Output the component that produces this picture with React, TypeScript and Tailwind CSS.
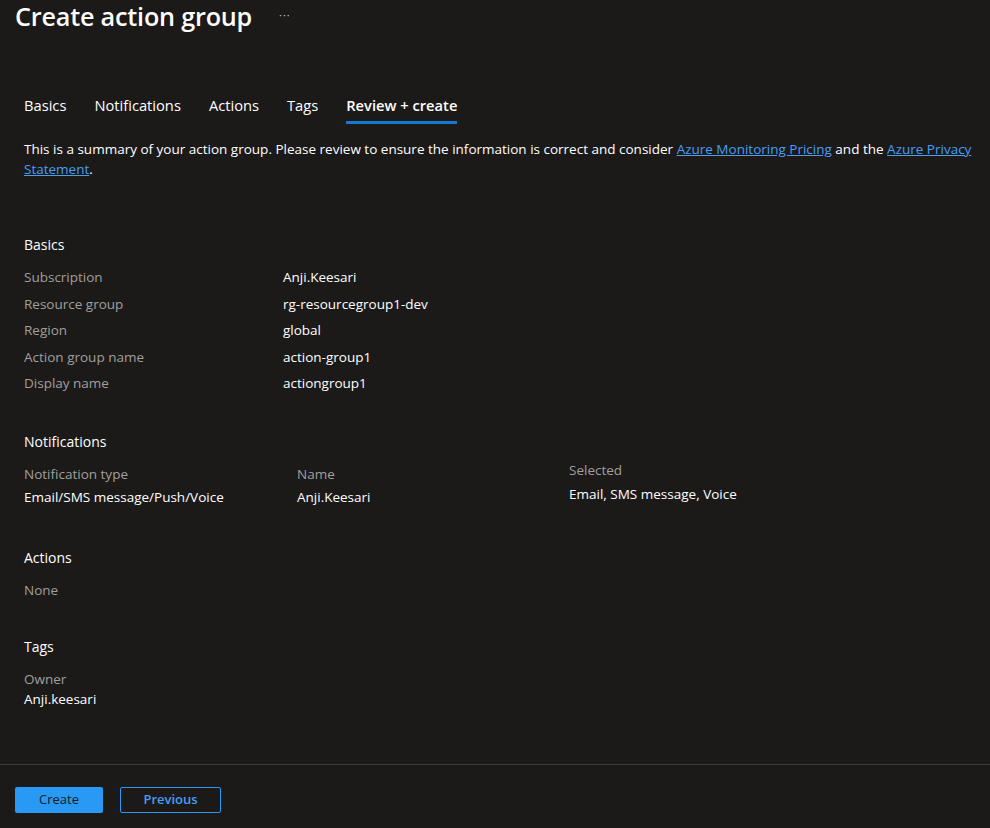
const font = { fontFamily: '"Open Sans", "Noto Sans", sans-serif' };

type Row = { label: string; value: string };

const basics: Row[] = [
    { label: "Subscription", value: "Anji.Keesari" },
    { label: "Resource group", value: "rg-resourcegroup1-dev" },
    { label: "Region", value: "global" },
    { label: "Action group name", value: "action-group1" },
    { label: "Display name", value: "actiongroup1" },
];

const tabs = ["Basics", "Notifications", "Actions", "Tags", "Review + create"];

export default function App() {
    return (
        <div style={font} className="w-[990px] h-[828px] bg-[#1b1a19] text-white flex flex-col overflow-hidden">
            <div className="flex-1 pl-[24px] pr-[12px]">
                {/* header */}
                <div className="flex items-center h-[34px] -ml-[9px]">
                    <h1 className="text-[25.2px] font-semibold tracking-[-0.2px] leading-none">Create action group</h1>
                    <span className="ml-[27px] text-[11px] text-[#c8c6c4] tracking-[1px] -mt-[4px]">···</span>
                </div>

                {/* tabs */}
                <div className="flex gap-[28px] mt-[60px] text-[14.7px]">
                    {tabs.map((t, i) => (
                        <div key={t} className={"pb-[5px] border-b-[3px] " + (i === 4 ? "border-[#1479d4] font-semibold" : "border-transparent")}>
                            {t}
                        </div>
                    ))}
                </div>

                <p className="mt-[15px] text-[13.5px] leading-[20px] text-white">
                    This is a summary of your action group. Please review to ensure the information is correct and consider{" "}
                    <a className="text-[#479ef5] underline">Azure Monitoring Pricing</a> and the{" "}
                    <a className="text-[#479ef5] underline">Azure Privacy Statement</a>.
                </p>

                {/* basics */}
                <h2 className="mt-[55px] text-[14px]">Basics</h2>
                <div className="mt-[9px] flex flex-col text-[13.5px]">
                    {basics.map((r) => (
                        <div key={r.label} className="flex h-[26.5px] items-center">
                            <div className="w-[259px] text-[#a19f9d]">{r.label}</div>
                            <div>{r.value}</div>
                        </div>
                    ))}
                </div>

                {/* notifications */}
                <h2 className="mt-[34px] text-[14px]">Notifications</h2>
                <div className="mt-[8px] grid grid-cols-[273px_272px_1fr] text-[13.5px] leading-[20px]">
                    <div>
                        <div className="text-[#a19f9d] mt-[4px]">Notification type</div>
                        <div className="mt-[3px]">Email/SMS message/Push/Voice</div>
                    </div>
                    <div>
                        <div className="text-[#a19f9d] mt-[4px]">Name</div>
                        <div className="mt-[3px]">Anji.Keesari</div>
                    </div>
                    <div>
                        <div className="text-[#a19f9d]">Selected</div>
                        <div className="mt-[4px]">Email, SMS message, Voice</div>
                    </div>
                </div>

                {/* actions */}
                <h2 className="mt-[40px] text-[14px]">Actions</h2>
                <div className="mt-[12px] text-[13.5px] text-[#a19f9d]">None</div>

                {/* tags */}
                <h2 className="mt-[36px] text-[14px]">Tags</h2>
                <div className="mt-[12px] text-[13.5px] leading-[20px] text-[#a19f9d]">Owner</div>
                <div className="text-[13.5px] leading-[20px]">Anji.keesari</div>
            </div>

            {/* footer */}
            <div className="border-t border-[#3b3a39] h-[64px] flex items-center gap-[17px] px-[15px] pt-[6px]">
                <button className="w-[88px] h-[26px] rounded-[2px] bg-[#2899f5] text-[#1b1a19] text-[13px]">Create</button>
                <button className="w-[101px] h-[26px] rounded-[2px] border border-[#2899f5] text-[#479ef5] text-[13px] font-semibold">Previous</button>
            </div>
        </div>
    );
}
